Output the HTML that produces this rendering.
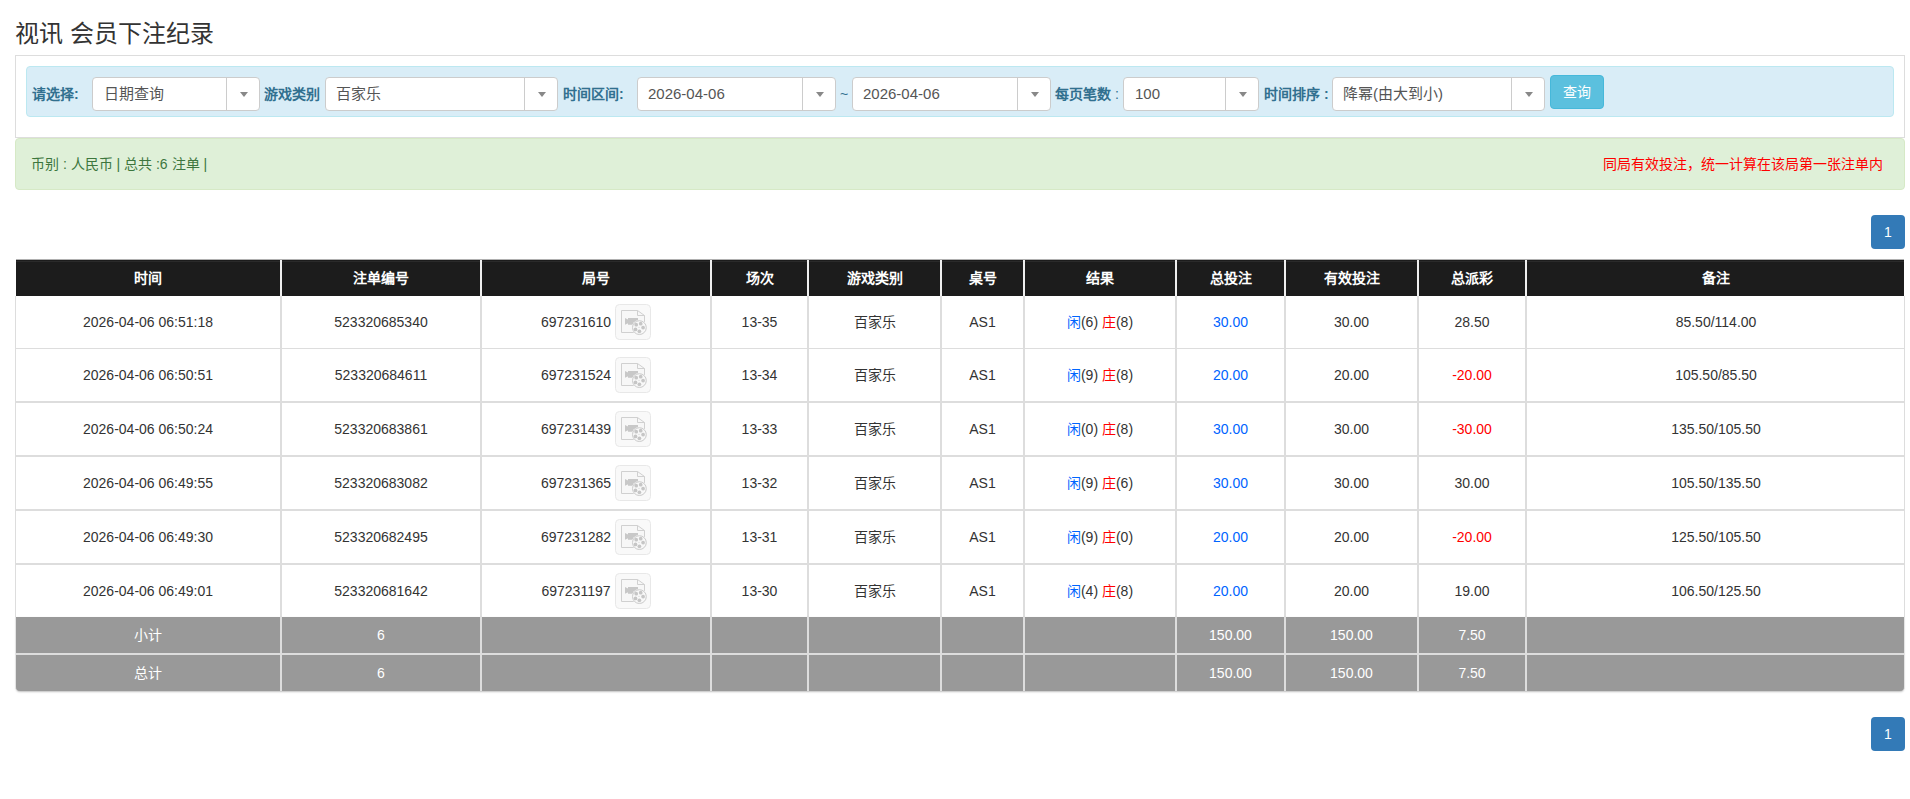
<!DOCTYPE html>
<html lang="zh-CN"><head><meta charset="utf-8"><title>视讯 会员下注纪录</title>
<style>
*{box-sizing:border-box;margin:0;padding:0}
html,body{width:1910px;height:799px;overflow:hidden;background:#fff}
body{font-family:"Liberation Sans",sans-serif;font-size:14px;color:#333;position:relative}
.a{position:absolute}
.title{left:15px;top:14px;font-size:24px;color:#333;white-space:nowrap}
.panel{left:15px;top:55px;width:1890px;height:83px;border:1px solid #ddd;border-bottom-color:#ddd}
.info{left:26px;top:66px;width:1868px;height:51px;background:#d9edf7;border:1px solid #bce8f1;border-radius:4px}
.lbl{font-weight:bold;color:#31708f;white-space:nowrap;top:86px;line-height:16px}
.sel{top:77px;height:34px;background:#fff;border:1px solid #ccc;border-radius:4px}
.sel .tx{position:absolute;top:0;height:32px;line-height:32px;font-size:15px;color:#555;white-space:nowrap}
.sel .dv{position:absolute;top:0;width:1px;height:32px;background:#ccc}
.sel .ar{position:absolute;top:14px;width:0;height:0;border-left:4px solid transparent;border-right:4px solid transparent;border-top:5px solid #888}
.btn{left:1550px;top:75px;width:54px;height:34px;background:#5bc0de;border:1px solid #46b8da;border-radius:4px;color:#fff;text-align:center;line-height:32px;font-size:14px}
.ok{left:15px;top:138px;width:1890px;height:52px;background:#dff0d8;border:1px solid #d6e9c6;border-radius:4px}
.oktx{left:31px;top:156px;color:#3c763d;white-space:nowrap;line-height:16px}
.red{right:27px;top:156px;color:#f00;white-space:nowrap;line-height:16px}
.pg{left:1871px;width:34px;height:34px;background:#337ab7;border-radius:4px;color:#fff;text-align:center;line-height:34px;font-size:14px}
.c{position:absolute;display:flex;align-items:center;justify-content:center;white-space:nowrap}
.th{background:#1c1c1c;color:#fff;font-weight:bold}
.hs{background:#efefef}
.bs{background:#ddd}
.ft{background:#999;color:#fff}
.bl{color:#0064ff}
.rd{color:#f00}
.ic{margin-left:4px;flex:none}
.up{position:relative;top:-1px}
</style></head><body>
<div class="a title">视讯 会员下注纪录</div>
<div class="a panel"></div>
<div class="a info"></div>

<div class="a lbl" style="left:32px">请选择:</div>
<div class="a lbl" style="left:264px">游戏类别</div>
<div class="a lbl" style="left:563px">时间区间:</div>
<div class="a lbl" style="left:1055px">每页笔数 <span style="font-weight:normal">:</span></div>
<div class="a lbl" style="left:1264px">时间排序 :</div>
<div class="a lbl" style="left:840px;font-weight:normal">~</div>
<div class="a sel" style="left:92px;width:168px"><div class="tx" style="left:11px">日期查询</div><div class="dv" style="left:133px"></div><div class="ar" style="left:147px"></div></div>
<div class="a sel" style="left:325px;width:233px"><div class="tx" style="left:10px">百家乐</div><div class="dv" style="left:198px"></div><div class="ar" style="left:212px"></div></div>
<div class="a sel" style="left:637px;width:199px"><div class="tx" style="left:10px">2026-04-06</div><div class="dv" style="left:164px"></div><div class="ar" style="left:178px"></div></div>
<div class="a sel" style="left:852px;width:199px"><div class="tx" style="left:10px">2026-04-06</div><div class="dv" style="left:164px"></div><div class="ar" style="left:178px"></div></div>
<div class="a sel" style="left:1123px;width:136px"><div class="tx" style="left:11px">100</div><div class="dv" style="left:101px"></div><div class="ar" style="left:115px"></div></div>
<div class="a sel" style="left:1332px;width:213px"><div class="tx" style="left:10px">降幂(由大到小)</div><div class="dv" style="left:178px"></div><div class="ar" style="left:192px"></div></div>
<div class="a btn">查询</div>
<div class="a ok"></div><div class="a oktx">币别 : 人民币 | 总共 :6 注单 |</div><div class="a red">同局有效投注，统一计算在该局第一张注单内</div>
<div class="a pg" style="top:215px">1</div><div class="a pg" style="top:717px">1</div>
<div class="a" style="left:15px;top:296px;width:1890px;height:321px;border-left:1px solid #ddd;border-right:1px solid #ddd"></div>
<div class="a bs" style="left:15px;top:348px;width:1890px;height:1px"></div>
<div class="a bs" style="left:15px;top:401px;width:1890px;height:2px"></div>
<div class="a bs" style="left:15px;top:455px;width:1890px;height:2px"></div>
<div class="a bs" style="left:15px;top:509px;width:1890px;height:2px"></div>
<div class="a bs" style="left:15px;top:563px;width:1890px;height:2px"></div>
<div class="a th" style="left:16px;top:260px;width:1888px;height:36px"></div>
<div class="a" style="left:16px;top:259px;width:1888px;height:1px;background:rgba(28,28,28,.35)"></div><div class="a" style="left:16px;top:261px;width:1888px;height:1px;background:#2a2a2a"></div>
<div class="a hs" style="left:280px;top:260px;width:2px;height:36px"></div>
<div class="a bs" style="left:280px;top:296px;width:2px;height:321px"></div>
<div class="a hs" style="left:480px;top:260px;width:2px;height:36px"></div>
<div class="a bs" style="left:480px;top:296px;width:2px;height:321px"></div>
<div class="a hs" style="left:710px;top:260px;width:2px;height:36px"></div>
<div class="a bs" style="left:710px;top:296px;width:2px;height:321px"></div>
<div class="a hs" style="left:807px;top:260px;width:2px;height:36px"></div>
<div class="a bs" style="left:807px;top:296px;width:2px;height:321px"></div>
<div class="a hs" style="left:940px;top:260px;width:2px;height:36px"></div>
<div class="a bs" style="left:940px;top:296px;width:2px;height:321px"></div>
<div class="a hs" style="left:1023px;top:260px;width:2px;height:36px"></div>
<div class="a bs" style="left:1023px;top:296px;width:2px;height:321px"></div>
<div class="a hs" style="left:1175px;top:260px;width:2px;height:36px"></div>
<div class="a bs" style="left:1175px;top:296px;width:2px;height:321px"></div>
<div class="a hs" style="left:1284px;top:260px;width:2px;height:36px"></div>
<div class="a bs" style="left:1284px;top:296px;width:2px;height:321px"></div>
<div class="a hs" style="left:1417px;top:260px;width:2px;height:36px"></div>
<div class="a bs" style="left:1417px;top:296px;width:2px;height:321px"></div>
<div class="a hs" style="left:1525px;top:260px;width:2px;height:36px"></div>
<div class="a bs" style="left:1525px;top:296px;width:2px;height:321px"></div>
<div class="c" style="left:16px;top:260px;width:264px;height:36px;color:#fff;font-weight:bold"><span class="up">时间</span></div>
<div class="c" style="left:282px;top:260px;width:198px;height:36px;color:#fff;font-weight:bold"><span class="up">注单编号</span></div>
<div class="c" style="left:482px;top:260px;width:228px;height:36px;color:#fff;font-weight:bold"><span class="up">局号</span></div>
<div class="c" style="left:712px;top:260px;width:95px;height:36px;color:#fff;font-weight:bold"><span class="up">场次</span></div>
<div class="c" style="left:809px;top:260px;width:131px;height:36px;color:#fff;font-weight:bold"><span class="up">游戏类别</span></div>
<div class="c" style="left:942px;top:260px;width:81px;height:36px;color:#fff;font-weight:bold"><span class="up">桌号</span></div>
<div class="c" style="left:1025px;top:260px;width:150px;height:36px;color:#fff;font-weight:bold"><span class="up">结果</span></div>
<div class="c" style="left:1177px;top:260px;width:107px;height:36px;color:#fff;font-weight:bold"><span class="up">总投注</span></div>
<div class="c" style="left:1286px;top:260px;width:131px;height:36px;color:#fff;font-weight:bold"><span class="up">有效投注</span></div>
<div class="c" style="left:1419px;top:260px;width:106px;height:36px;color:#fff;font-weight:bold"><span class="up">总派彩</span></div>
<div class="c" style="left:1527px;top:260px;width:378px;height:36px;color:#fff;font-weight:bold"><span class="up">备注</span></div>
<div class="c" style="left:16px;top:296px;width:264px;height:52px">2026-04-06 06:51:18</div>
<div class="c" style="left:282px;top:296px;width:198px;height:52px">523320685340</div>
<div class="c" style="left:482px;top:296px;width:228px;height:52px">697231610<svg class="ic" width="36" height="36" viewBox="0 0 36 36"><rect x="0.5" y="0.5" width="35" height="35" rx="4" fill="#f9f9f9" stroke="#e8e8e8"/><path d="M6.5,6.5H22.5L29.5,11.5V28.5H6.5Z" fill="#f7f7f7" stroke="#d0d0d0"/><path d="M22.5,6.5V11.5H29.5" fill="none" stroke="#d0d0d0"/><path d="M13,13.9H23V20.8H13Z M10,13.9 L13,15.4 V19.3 L10,20.8Z" fill="#c8c8c8"/><circle cx="24.4" cy="23.6" r="7.6" fill="#f9f9f9"/><circle cx="24.4" cy="23.6" r="6.9" fill="#f8f8f8" stroke="#cbcbcb"/><g fill="#c6c6c6"><circle cx="21.2" cy="20.7" r="1.85"/><circle cx="25.7" cy="19.7" r="1.85"/><circle cx="28.1" cy="23.6" r="1.85"/><circle cx="24.4" cy="27.3" r="1.85"/><circle cx="20.5" cy="25.4" r="1.85"/><circle cx="24" cy="23.2" r="0.5"/></g></svg></div>
<div class="c" style="left:712px;top:296px;width:95px;height:52px">13-35</div>
<div class="c" style="left:809px;top:296px;width:131px;height:52px"><span class="up">百家乐</span></div>
<div class="c" style="left:942px;top:296px;width:81px;height:52px">AS1</div>
<div class="c" style="left:1025px;top:296px;width:150px;height:52px"><span class="bl up">闲</span>(6)&nbsp;<span class="rd up">庄</span>(8)</div>
<div class="c" style="left:1177px;top:296px;width:107px;height:52px"><span class="bl">30.00</span></div>
<div class="c" style="left:1286px;top:296px;width:131px;height:52px">30.00</div>
<div class="c" style="left:1419px;top:296px;width:106px;height:52px">28.50</div>
<div class="c" style="left:1527px;top:296px;width:378px;height:52px">85.50/114.00</div>
<div class="c" style="left:16px;top:349px;width:264px;height:52px">2026-04-06 06:50:51</div>
<div class="c" style="left:282px;top:349px;width:198px;height:52px">523320684611</div>
<div class="c" style="left:482px;top:349px;width:228px;height:52px">697231524<svg class="ic" width="36" height="36" viewBox="0 0 36 36"><rect x="0.5" y="0.5" width="35" height="35" rx="4" fill="#f9f9f9" stroke="#e8e8e8"/><path d="M6.5,6.5H22.5L29.5,11.5V28.5H6.5Z" fill="#f7f7f7" stroke="#d0d0d0"/><path d="M22.5,6.5V11.5H29.5" fill="none" stroke="#d0d0d0"/><path d="M13,13.9H23V20.8H13Z M10,13.9 L13,15.4 V19.3 L10,20.8Z" fill="#c8c8c8"/><circle cx="24.4" cy="23.6" r="7.6" fill="#f9f9f9"/><circle cx="24.4" cy="23.6" r="6.9" fill="#f8f8f8" stroke="#cbcbcb"/><g fill="#c6c6c6"><circle cx="21.2" cy="20.7" r="1.85"/><circle cx="25.7" cy="19.7" r="1.85"/><circle cx="28.1" cy="23.6" r="1.85"/><circle cx="24.4" cy="27.3" r="1.85"/><circle cx="20.5" cy="25.4" r="1.85"/><circle cx="24" cy="23.2" r="0.5"/></g></svg></div>
<div class="c" style="left:712px;top:349px;width:95px;height:52px">13-34</div>
<div class="c" style="left:809px;top:349px;width:131px;height:52px"><span class="up">百家乐</span></div>
<div class="c" style="left:942px;top:349px;width:81px;height:52px">AS1</div>
<div class="c" style="left:1025px;top:349px;width:150px;height:52px"><span class="bl up">闲</span>(9)&nbsp;<span class="rd up">庄</span>(8)</div>
<div class="c" style="left:1177px;top:349px;width:107px;height:52px"><span class="bl">20.00</span></div>
<div class="c" style="left:1286px;top:349px;width:131px;height:52px">20.00</div>
<div class="c" style="left:1419px;top:349px;width:106px;height:52px"><span class="rd">-20.00</span></div>
<div class="c" style="left:1527px;top:349px;width:378px;height:52px">105.50/85.50</div>
<div class="c" style="left:16px;top:403px;width:264px;height:52px">2026-04-06 06:50:24</div>
<div class="c" style="left:282px;top:403px;width:198px;height:52px">523320683861</div>
<div class="c" style="left:482px;top:403px;width:228px;height:52px">697231439<svg class="ic" width="36" height="36" viewBox="0 0 36 36"><rect x="0.5" y="0.5" width="35" height="35" rx="4" fill="#f9f9f9" stroke="#e8e8e8"/><path d="M6.5,6.5H22.5L29.5,11.5V28.5H6.5Z" fill="#f7f7f7" stroke="#d0d0d0"/><path d="M22.5,6.5V11.5H29.5" fill="none" stroke="#d0d0d0"/><path d="M13,13.9H23V20.8H13Z M10,13.9 L13,15.4 V19.3 L10,20.8Z" fill="#c8c8c8"/><circle cx="24.4" cy="23.6" r="7.6" fill="#f9f9f9"/><circle cx="24.4" cy="23.6" r="6.9" fill="#f8f8f8" stroke="#cbcbcb"/><g fill="#c6c6c6"><circle cx="21.2" cy="20.7" r="1.85"/><circle cx="25.7" cy="19.7" r="1.85"/><circle cx="28.1" cy="23.6" r="1.85"/><circle cx="24.4" cy="27.3" r="1.85"/><circle cx="20.5" cy="25.4" r="1.85"/><circle cx="24" cy="23.2" r="0.5"/></g></svg></div>
<div class="c" style="left:712px;top:403px;width:95px;height:52px">13-33</div>
<div class="c" style="left:809px;top:403px;width:131px;height:52px"><span class="up">百家乐</span></div>
<div class="c" style="left:942px;top:403px;width:81px;height:52px">AS1</div>
<div class="c" style="left:1025px;top:403px;width:150px;height:52px"><span class="bl up">闲</span>(0)&nbsp;<span class="rd up">庄</span>(8)</div>
<div class="c" style="left:1177px;top:403px;width:107px;height:52px"><span class="bl">30.00</span></div>
<div class="c" style="left:1286px;top:403px;width:131px;height:52px">30.00</div>
<div class="c" style="left:1419px;top:403px;width:106px;height:52px"><span class="rd">-30.00</span></div>
<div class="c" style="left:1527px;top:403px;width:378px;height:52px">135.50/105.50</div>
<div class="c" style="left:16px;top:457px;width:264px;height:52px">2026-04-06 06:49:55</div>
<div class="c" style="left:282px;top:457px;width:198px;height:52px">523320683082</div>
<div class="c" style="left:482px;top:457px;width:228px;height:52px">697231365<svg class="ic" width="36" height="36" viewBox="0 0 36 36"><rect x="0.5" y="0.5" width="35" height="35" rx="4" fill="#f9f9f9" stroke="#e8e8e8"/><path d="M6.5,6.5H22.5L29.5,11.5V28.5H6.5Z" fill="#f7f7f7" stroke="#d0d0d0"/><path d="M22.5,6.5V11.5H29.5" fill="none" stroke="#d0d0d0"/><path d="M13,13.9H23V20.8H13Z M10,13.9 L13,15.4 V19.3 L10,20.8Z" fill="#c8c8c8"/><circle cx="24.4" cy="23.6" r="7.6" fill="#f9f9f9"/><circle cx="24.4" cy="23.6" r="6.9" fill="#f8f8f8" stroke="#cbcbcb"/><g fill="#c6c6c6"><circle cx="21.2" cy="20.7" r="1.85"/><circle cx="25.7" cy="19.7" r="1.85"/><circle cx="28.1" cy="23.6" r="1.85"/><circle cx="24.4" cy="27.3" r="1.85"/><circle cx="20.5" cy="25.4" r="1.85"/><circle cx="24" cy="23.2" r="0.5"/></g></svg></div>
<div class="c" style="left:712px;top:457px;width:95px;height:52px">13-32</div>
<div class="c" style="left:809px;top:457px;width:131px;height:52px"><span class="up">百家乐</span></div>
<div class="c" style="left:942px;top:457px;width:81px;height:52px">AS1</div>
<div class="c" style="left:1025px;top:457px;width:150px;height:52px"><span class="bl up">闲</span>(9)&nbsp;<span class="rd up">庄</span>(6)</div>
<div class="c" style="left:1177px;top:457px;width:107px;height:52px"><span class="bl">30.00</span></div>
<div class="c" style="left:1286px;top:457px;width:131px;height:52px">30.00</div>
<div class="c" style="left:1419px;top:457px;width:106px;height:52px">30.00</div>
<div class="c" style="left:1527px;top:457px;width:378px;height:52px">105.50/135.50</div>
<div class="c" style="left:16px;top:511px;width:264px;height:52px">2026-04-06 06:49:30</div>
<div class="c" style="left:282px;top:511px;width:198px;height:52px">523320682495</div>
<div class="c" style="left:482px;top:511px;width:228px;height:52px">697231282<svg class="ic" width="36" height="36" viewBox="0 0 36 36"><rect x="0.5" y="0.5" width="35" height="35" rx="4" fill="#f9f9f9" stroke="#e8e8e8"/><path d="M6.5,6.5H22.5L29.5,11.5V28.5H6.5Z" fill="#f7f7f7" stroke="#d0d0d0"/><path d="M22.5,6.5V11.5H29.5" fill="none" stroke="#d0d0d0"/><path d="M13,13.9H23V20.8H13Z M10,13.9 L13,15.4 V19.3 L10,20.8Z" fill="#c8c8c8"/><circle cx="24.4" cy="23.6" r="7.6" fill="#f9f9f9"/><circle cx="24.4" cy="23.6" r="6.9" fill="#f8f8f8" stroke="#cbcbcb"/><g fill="#c6c6c6"><circle cx="21.2" cy="20.7" r="1.85"/><circle cx="25.7" cy="19.7" r="1.85"/><circle cx="28.1" cy="23.6" r="1.85"/><circle cx="24.4" cy="27.3" r="1.85"/><circle cx="20.5" cy="25.4" r="1.85"/><circle cx="24" cy="23.2" r="0.5"/></g></svg></div>
<div class="c" style="left:712px;top:511px;width:95px;height:52px">13-31</div>
<div class="c" style="left:809px;top:511px;width:131px;height:52px"><span class="up">百家乐</span></div>
<div class="c" style="left:942px;top:511px;width:81px;height:52px">AS1</div>
<div class="c" style="left:1025px;top:511px;width:150px;height:52px"><span class="bl up">闲</span>(9)&nbsp;<span class="rd up">庄</span>(0)</div>
<div class="c" style="left:1177px;top:511px;width:107px;height:52px"><span class="bl">20.00</span></div>
<div class="c" style="left:1286px;top:511px;width:131px;height:52px">20.00</div>
<div class="c" style="left:1419px;top:511px;width:106px;height:52px"><span class="rd">-20.00</span></div>
<div class="c" style="left:1527px;top:511px;width:378px;height:52px">125.50/105.50</div>
<div class="c" style="left:16px;top:565px;width:264px;height:52px">2026-04-06 06:49:01</div>
<div class="c" style="left:282px;top:565px;width:198px;height:52px">523320681642</div>
<div class="c" style="left:482px;top:565px;width:228px;height:52px">697231197<svg class="ic" width="36" height="36" viewBox="0 0 36 36"><rect x="0.5" y="0.5" width="35" height="35" rx="4" fill="#f9f9f9" stroke="#e8e8e8"/><path d="M6.5,6.5H22.5L29.5,11.5V28.5H6.5Z" fill="#f7f7f7" stroke="#d0d0d0"/><path d="M22.5,6.5V11.5H29.5" fill="none" stroke="#d0d0d0"/><path d="M13,13.9H23V20.8H13Z M10,13.9 L13,15.4 V19.3 L10,20.8Z" fill="#c8c8c8"/><circle cx="24.4" cy="23.6" r="7.6" fill="#f9f9f9"/><circle cx="24.4" cy="23.6" r="6.9" fill="#f8f8f8" stroke="#cbcbcb"/><g fill="#c6c6c6"><circle cx="21.2" cy="20.7" r="1.85"/><circle cx="25.7" cy="19.7" r="1.85"/><circle cx="28.1" cy="23.6" r="1.85"/><circle cx="24.4" cy="27.3" r="1.85"/><circle cx="20.5" cy="25.4" r="1.85"/><circle cx="24" cy="23.2" r="0.5"/></g></svg></div>
<div class="c" style="left:712px;top:565px;width:95px;height:52px">13-30</div>
<div class="c" style="left:809px;top:565px;width:131px;height:52px"><span class="up">百家乐</span></div>
<div class="c" style="left:942px;top:565px;width:81px;height:52px">AS1</div>
<div class="c" style="left:1025px;top:565px;width:150px;height:52px"><span class="bl up">闲</span>(4)&nbsp;<span class="rd up">庄</span>(8)</div>
<div class="c" style="left:1177px;top:565px;width:107px;height:52px"><span class="bl">20.00</span></div>
<div class="c" style="left:1286px;top:565px;width:131px;height:52px">20.00</div>
<div class="c" style="left:1419px;top:565px;width:106px;height:52px">19.00</div>
<div class="c" style="left:1527px;top:565px;width:378px;height:52px">106.50/125.50</div>
<div class="a" style="left:16px;top:617px;width:1888px;height:74px;border-radius:0 0 4px 4px;box-shadow:0 1px 2px rgba(0,0,0,.25);background:#999"></div>
<div class="a" style="left:15px;top:653px;width:1890px;height:2px;background:#ddd"></div>
<div class="a" style="left:15px;top:617px;width:1px;height:72px;background:#e4e4e4"></div><div class="a" style="left:1904px;top:617px;width:1px;height:72px;background:#e4e4e4"></div>
<div class="a bs" style="left:280px;top:617px;width:2px;height:74px"></div>
<div class="a bs" style="left:480px;top:617px;width:2px;height:74px"></div>
<div class="a bs" style="left:710px;top:617px;width:2px;height:74px"></div>
<div class="a bs" style="left:807px;top:617px;width:2px;height:74px"></div>
<div class="a bs" style="left:940px;top:617px;width:2px;height:74px"></div>
<div class="a bs" style="left:1023px;top:617px;width:2px;height:74px"></div>
<div class="a bs" style="left:1175px;top:617px;width:2px;height:74px"></div>
<div class="a bs" style="left:1284px;top:617px;width:2px;height:74px"></div>
<div class="a bs" style="left:1417px;top:617px;width:2px;height:74px"></div>
<div class="a bs" style="left:1525px;top:617px;width:2px;height:74px"></div>
<div class="c" style="left:16px;top:617px;width:264px;height:36px;color:#fff"><span class="up">小计</span></div>
<div class="c" style="left:282px;top:617px;width:198px;height:36px;color:#fff">6</div>
<div class="c" style="left:1177px;top:617px;width:107px;height:36px;color:#fff">150.00</div>
<div class="c" style="left:1286px;top:617px;width:131px;height:36px;color:#fff">150.00</div>
<div class="c" style="left:1419px;top:617px;width:106px;height:36px;color:#fff">7.50</div>
<div class="c" style="left:16px;top:655px;width:264px;height:36px;color:#fff"><span class="up">总计</span></div>
<div class="c" style="left:282px;top:655px;width:198px;height:36px;color:#fff">6</div>
<div class="c" style="left:1177px;top:655px;width:107px;height:36px;color:#fff">150.00</div>
<div class="c" style="left:1286px;top:655px;width:131px;height:36px;color:#fff">150.00</div>
<div class="c" style="left:1419px;top:655px;width:106px;height:36px;color:#fff">7.50</div>
</body></html>
